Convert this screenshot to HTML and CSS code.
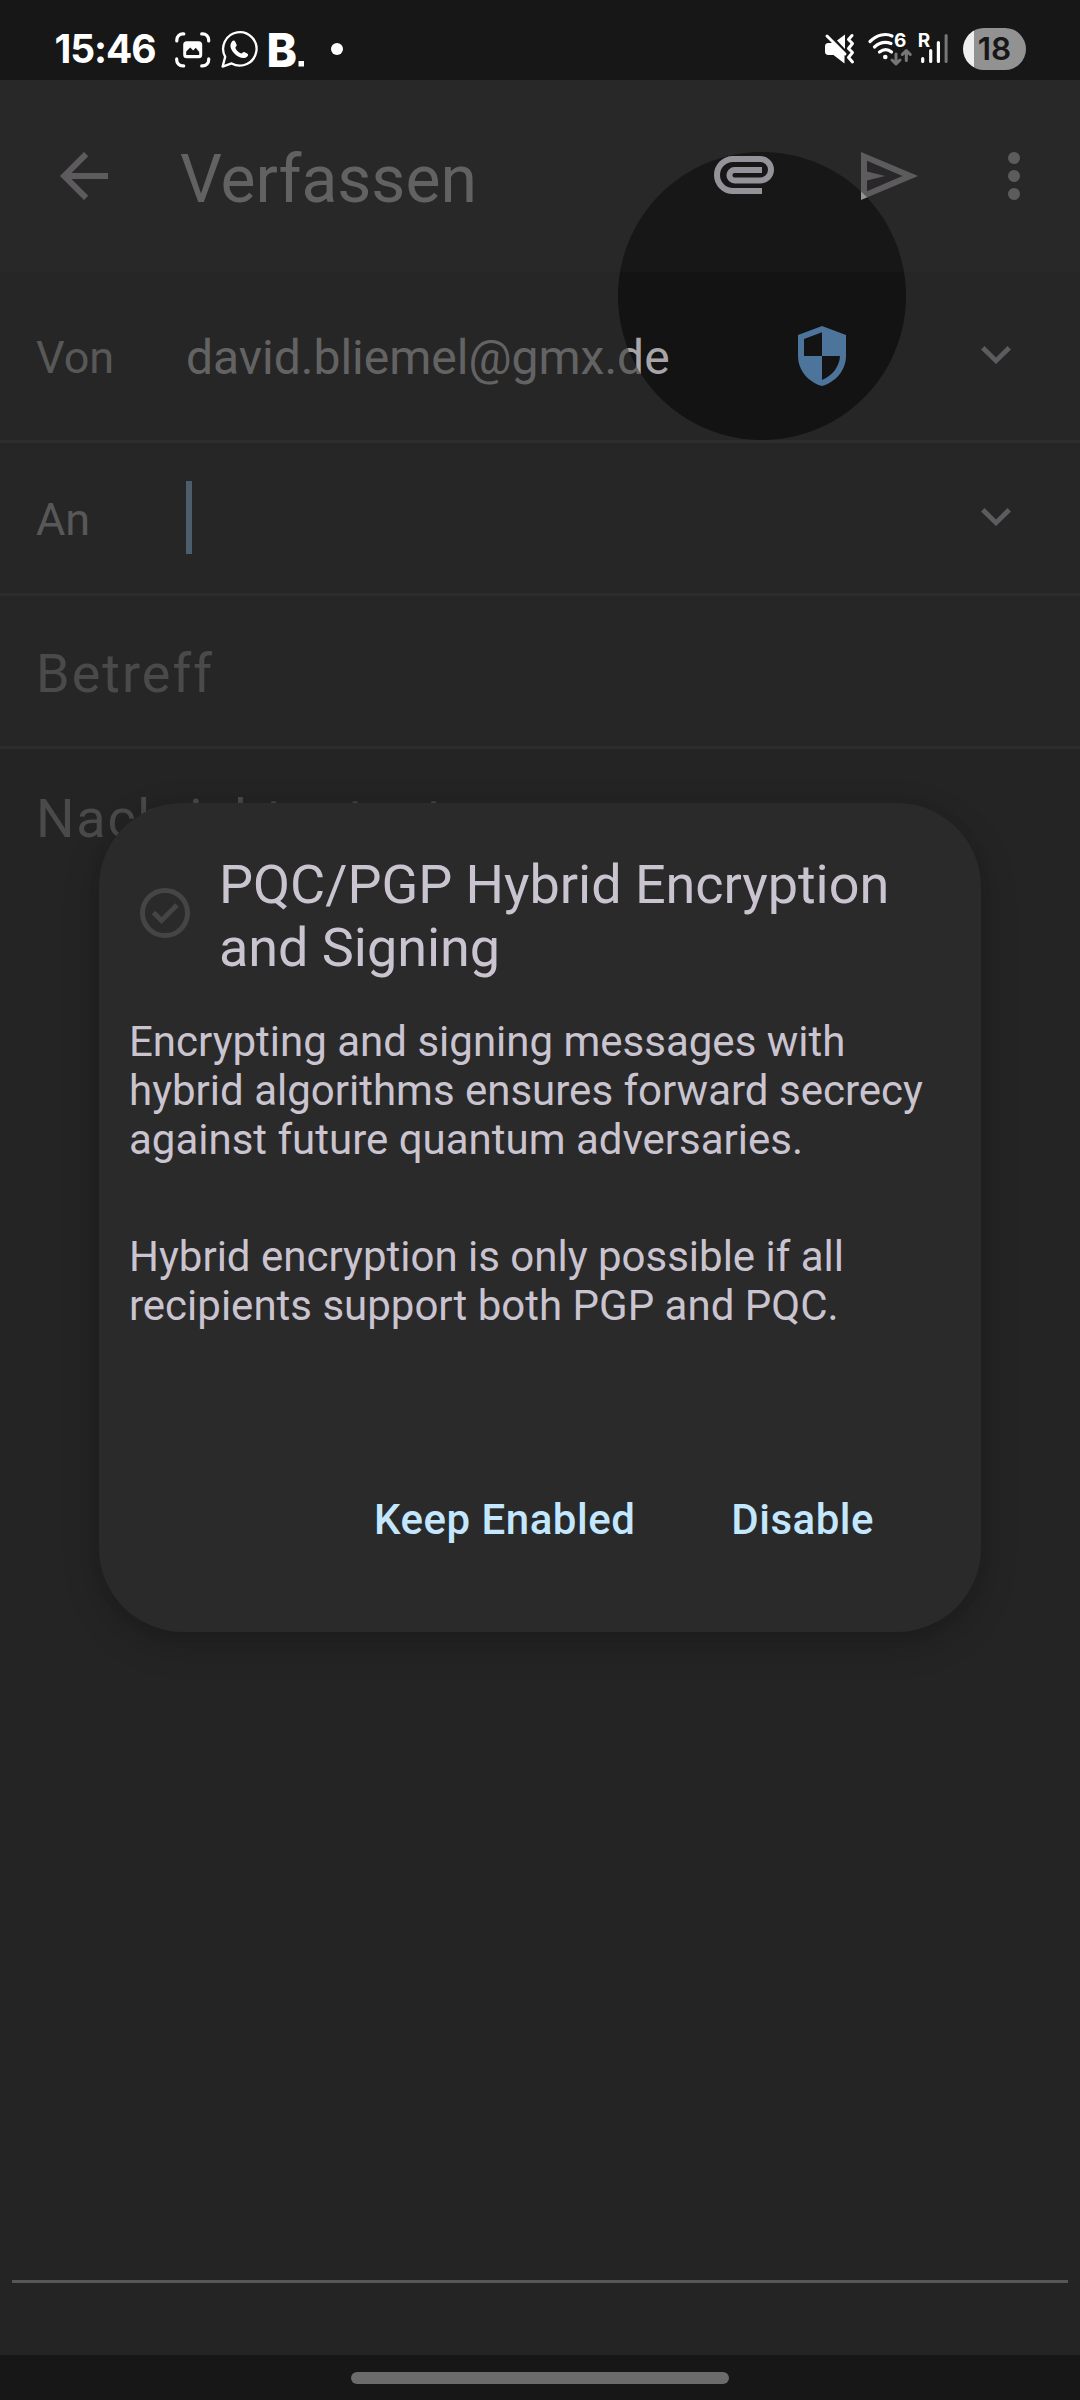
FILE: index.html
```html
<!DOCTYPE html>
<html lang="de">
<head>
<meta charset="utf-8">
<title>Verfassen</title>
<link rel="stylesheet" href="styles.css">
</head>
<body>
<div class="screen">
  <header class="status">
    <span class="clock">15:46</span>
    <svg class="status-left" width="172" height="44" viewBox="0 0 172 44" fill="none">
      <g transform="translate(1.200 .9)">
        <path stroke="#fff" stroke-width="3.200" stroke-linecap="round" d="M1.600 9V8a6 6 0 0 1 6-6h1M26.500 2h1a6 6 0 0 1 6 6v1M33.500 27v1a6 6 0 0 1-6 6h-1M8.500 34h-1a6 6 0 0 1-6-6v-1"/>
        <rect x="8" y="9.300" width="19" height="17" rx="3.500" fill="#fff"/>
        <path d="M11 23v-3.500l4-4 3 3 2.500-2.700 3.500 4.200v3z" fill="#171717"/>
      </g>
      <path stroke="#fff" stroke-width="2.300" stroke-linejoin="round" d="M48.600 35.600L51.200 25.900A16.700 16.700 0 1 1 57.600 32.400z"/>
      <path d="M58 10.500c1-1.400 2.600-1.300 3.300.2l1.300 3c.5 1.200-1.400 2.500-1.200 3.300 1 2.600 3 4.500 5.700 5.500.9.300 1.900-2 3.100-1.500l3 1.500c1.300.8 1.200 2-.1 3.200-2 1.900-5.200 1.600-8 .3-3.700-1.700-6.300-4.600-7.900-7.900-1.200-2.600-1-5.600.8-7.600z" fill="#fff"/>
      <text class="b-logo" x="92.500" y="35.500" textLength="30.500" lengthAdjust="spacingAndGlyphs">B</text>
      <rect x="124.500" y="30" width="5.500" height="5.500" fill="#fff"/>
      <circle cx="163" cy="18" r="6" fill="#fff"/>
    </svg>
    <svg class="status-right" width="128" height="36" viewBox="0 0 128 36" fill="none">
      <path d="M4.500 11h5l11 11v9.500L9.500 23h-5A3 3 0 0 1 1 20v-6a3 3 0 0 1 3.500-3z" fill="#fff"/>
      <path d="M3 4l18 18" stroke="#fff" stroke-width="3" stroke-linecap="round"/>
      <path d="M13 8.500l8-6V17z" fill="#fff"/>
      <path d="M28 3.500l-3.500 4 4 4-4 5 4 4-4 5 4 4.500" stroke="#fff" stroke-width="3" stroke-linecap="round" stroke-linejoin="round"/>
      <g stroke="#fff" stroke-width="3.200" stroke-linecap="round">
        <path d="M46 9.500c7-7 16-8.500 22-5.500M50.500 15c5-4.500 11-5.500 16.500-3.500M55.500 20c4-3 8.500-3 12 0"/>
        <path d="M98.700 26.500v3M106.700 18.500v11M114.400 10.500v19"/>
      </g>
      <circle cx="61.300" cy="25" r="2.300" fill="#fff"/>
      <g stroke="#777" stroke-width="3" stroke-linecap="round" stroke-linejoin="round">
        <path d="M72 22v9.500M68 28l4 4 4-4M82.300 28.500V19M78.300 22.500l4-4 4 4"/>
        <path d="M122.100 3.500v26"/>
      </g>
      <text class="wifi-gen" x="70" y="15.300">6</text>
      <text class="roaming" x="93.700" y="15.300">R</text>
    </svg>
    <span class="battery">18</span>
  </header>

  <main class="app">
    <div class="toolbar">
      <svg class="back" viewBox="0 0 24 24"><path d="M20 11H7.830l5.590-5.590L12 4l-8 8 8 8 1.410-1.410L7.830 13H20z"/></svg>
      <h1 class="title">Verfassen</h1>
      <svg class="attach" viewBox="0 0 60 38"><path d="M48 35H19A16 16 0 0 1 19 3H46.250a10.750 10.750 0 0 1 0 21.500H20.650a5.250 5.250 0 0 1 0-10.500H48"/></svg>
      <svg class="send" viewBox="0 0 57 48"><path fill-rule="evenodd" d="M0 0l57 24L0 48zM6 8.800v30.400L41.500 24z"/><path d="M5 19.200L24 24 5 28.800z"/></svg>
      <svg class="more" viewBox="0 0 12 48"><circle cx="6" cy="6" r="6"/><circle cx="6" cy="24" r="6"/><circle cx="6" cy="42" r="6"/></svg>
    </div>
    <div class="row from">
      <span class="label">Von</span>
      <span class="address">david.bliemel@gmx.de</span>
      <svg class="shield" viewBox="0 0 48 60"><path fill-rule="evenodd" d="M24 0L48 9v21c0 14-10 26-24 30C10 56 0 44 0 30V9zM24 6.300L6 13v17h18zM24 30v24c10-4 17.500-13 18-24z"/></svg>
      <svg class="chevron" viewBox="0 0 30 18"><path d="M3.500 0L15 11.500 26.500 0 30 3.500 15 18 0 3.500z"/></svg>
    </div>
    <div class="row to">
      <span class="label">An</span>
      <span class="caret"></span>
      <svg class="chevron" viewBox="0 0 30 18"><path d="M3.500 0L15 11.500 26.500 0 30 3.500 15 18 0 3.500z"/></svg>
    </div>
    <div class="row subject"><span class="hint">Betreff</span></div>
    <div class="message"><span class="hint">Nachrichtentext</span></div>
    <div class="scrim"></div>
  </main>
  <footer class="nav"><span class="handle"></span></footer>

  <section class="dialog">
    <div class="dialog-head">
      <svg class="check" viewBox="0 0 50 50" fill="none"><circle cx="25" cy="25" r="22.500"/><path d="M13.500 24.500l8 8L37 17"/></svg>
      <h2>PQC/PGP Hybrid Encryption<br>and Signing</h2>
    </div>
    <p>Encrypting and signing messages with<br>hybrid algorithms ensures forward secrecy<br>against future quantum adversaries.</p>
    <p>Hybrid encryption is only possible if all<br>recipients support both PGP and PQC.</p>
    <div class="actions"><button>Keep Enabled</button><button>Disable</button></div>
  </section>
</div>
</body>
</html>
```
FILE: styles.css
```css
* { box-sizing: border-box; margin: 0; padding: 0; }
body { width: 1080px; height: 2400px; overflow: hidden; background: #171717; font-family: Roboto, "Liberation Sans", sans-serif; }
.screen { position: relative; width: 1080px; height: 2400px; display: flex; flex-direction: column; }

.status { height: 80px; display: flex; align-items: flex-start; background: #171717; color: #fff; }
.clock { flex: none; width: 174px; padding: 29px 0 0 54.5px; font: 700 39px/40px Inter, sans-serif; letter-spacing: -1.1px; white-space: nowrap; }
.status-left { margin-top: 31px; flex: none; overflow: visible; }
.b-logo { font: 800 47px Inter, sans-serif; fill: #fff; }
.status-right { margin: 32px 0 0 478px; flex: none; overflow: visible; }
.wifi-gen, .roaming { font: 700 19px Inter, sans-serif; fill: #fff; }
.battery { margin: 28px 0 0 11px; flex: none; width: 63px; height: 42px; border-radius: 21px; background: linear-gradient(90deg, #eee 10.5px, #929292 11px); color: #171717; font: 600 31.5px/41px Inter, sans-serif; text-align: center; }

.app { position: relative; height: 2275px; display: flex; flex-direction: column; background: #0d0d0d; }
.scrim {
  position: absolute; inset: 0; background: rgba(53, 53, 53, .59);
  -webkit-mask-image: radial-gradient(circle at 762px 216px, transparent 143.5px, #000 144.5px);
  mask-image: radial-gradient(circle at 762px 216px, transparent 143.5px, #000 144.5px);
}
.toolbar { height: 192px; flex: none; display: flex; align-items: center; background: #171717; padding: 0 60px 0 48px; fill: #96929a; }
.toolbar svg { flex: none; }
.back { width: 72px; height: 72px; }
.title { font-size: 66px; font-weight: 400; line-height: 76px; color: #a5a2a6; width: 534px; margin-left: 60px; padding-top: 7px; }
.attach { width: 60px; height: 38px; margin-bottom: 2px; fill: none; stroke: #96929a; stroke-width: 6; }
.send { width: 57px; height: 48px; margin-left: 87px; }
.more { width: 12px; height: 48px; margin-left: auto; }

.row { flex: none; display: flex; align-items: center; background: #131313; border-bottom: 3px solid #222; padding-left: 36px; }
.from { height: 171px; }
.to, .subject { height: 153px; }
.label { width: 150px; font-size: 45px; line-height: 53px; padding-top: 2px; color: #8a8a8a; }
.address { width: 612px; font-size: 48px; line-height: 56px; padding-top: 4px; color: #a7a5a8; }
.shield { width: 48px; height: 60px; fill: #4d749a; }
.chevron { width: 30px; height: 18px; margin: 0 69px 2px auto; fill: #96929a; }
.caret { width: 6px; height: 73px; margin-bottom: 2px; background: #6f96b8; }
.hint { font-size: 54px; line-height: 64px; letter-spacing: 1.8px; color: #6a6a6a; }
.subject .hint { padding-top: 5px; letter-spacing: 2px; }
.message { height: 1534px; margin: 0 12px; padding: 38px 24px 0; border-bottom: 3px solid #89898f; }

.nav { height: 45px; display: flex; justify-content: center; padding-top: 17px; background: #171717; }
.handle { width: 378px; height: 12px; border-radius: 6px; background: #6b6b6b; }

.dialog { position: absolute; left: 99px; top: 803px; width: 882px; height: 829px; padding: 50px 30px 0; border-radius: 84px; background: #2a2a2a; color: #cac4d0; box-shadow: 0 12px 36px rgba(0, 0, 0, .22), 0 0 14px rgba(0, 0, 0, .06); }
.dialog-head { display: flex; margin-bottom: 38px; }
.check { width: 50px; height: 50px; margin: 35px 29px 0 11px; stroke: #454545; stroke-width: 5; flex: none; }
.dialog h2 { font-size: 54px; font-weight: 400; line-height: 63px; letter-spacing: -.05px; white-space: nowrap; }
.dialog p { font-size: 42px; line-height: 49px; margin-bottom: 68px; white-space: nowrap; }
.actions { display: flex; justify-content: flex-end; gap: 96px; padding: 97px 77px 0 0; }
.actions button { border: 0; background: none; font: 500 42px/50px Roboto, sans-serif; letter-spacing: .5px; color: #c2e7ff; white-space: nowrap; }
```
